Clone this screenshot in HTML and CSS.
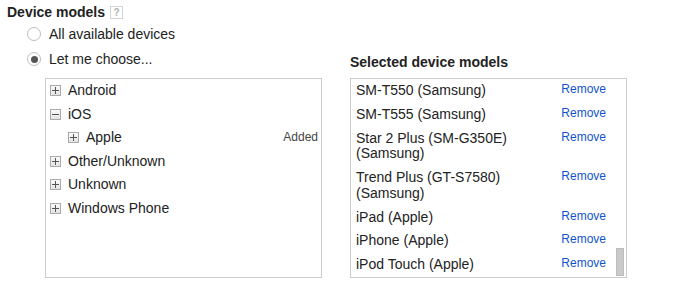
FILE: index.html
```html
<!DOCTYPE html>
<html lang="en">
<head>
    <meta charset="UTF-8">
    <title>Device models</title>
    <link rel="stylesheet" href="styles.css">
</head>
<body>
    <div class="page">
        <div class="title">Device models <span class="help">?</span></div>
        <label class="radio-row first">
            <span class="radio"></span>
            All available devices
        </label>
        <div class="columns">
            <div class="left-col">
                <label class="radio-row">
                    <span class="radio checked"></span>
                    Let me choose...
                </label>
                <div class="box tree">
                    <div class="node"><span class="toggle plus"></span><span class="label">Android</span></div>
                    <div class="node"><span class="toggle minus"></span><span class="label">iOS</span></div>
                    <div class="node child"><span class="toggle plus"></span><span class="label">Apple</span><span class="added">Added</span></div>
                    <div class="node"><span class="toggle plus"></span><span class="label">Other/Unknown</span></div>
                    <div class="node"><span class="toggle plus"></span><span class="label">Unknown</span></div>
                    <div class="node"><span class="toggle plus"></span><span class="label">Windows Phone</span></div>
                </div>
            </div>
            <div class="right-col">
                <div class="subtitle">Selected device models</div>
                <div class="box selected">
                    <div class="item"><span class="name">SM-T550 (Samsung)</span><a class="remove" href="#">Remove</a></div>
                    <div class="item"><span class="name">SM-T555 (Samsung)</span><a class="remove" href="#">Remove</a></div>
                    <div class="item"><span class="name">Star 2 Plus (SM-G350E) (Samsung)</span><a class="remove" href="#">Remove</a></div>
                    <div class="item"><span class="name">Trend Plus (GT-S7580) (Samsung)</span><a class="remove" href="#">Remove</a></div>
                    <div class="item"><span class="name">iPad (Apple)</span><a class="remove" href="#">Remove</a></div>
                    <div class="item"><span class="name">iPhone (Apple)</span><a class="remove" href="#">Remove</a></div>
                    <div class="item"><span class="name">iPod Touch (Apple)</span><a class="remove" href="#">Remove</a></div>
                    <div class="thumb"></div>
                </div>
            </div>
        </div>
    </div>
</body>
</html>
```

FILE: styles.css
```css
body {
    margin: 0;
    background-color: #fff;
    color: #222;
    font-family: "Liberation Sans", Arial, sans-serif;
    font-size: 14px;
}

.page {
    padding: 4px 0 0 7px;
}

.title {
    font-weight: bold;
    line-height: 16px;
    display: flex;
    align-items: center;
}

.help {
    width: 11px;
    height: 11px;
    margin-left: 5px;
    border: 1px solid #d4d4d4;
    color: #b0b0b0;
    font-size: 10px;
    font-weight: bold;
    line-height: 11px;
    text-align: center;
}

.radio-row {
    display: flex;
    align-items: center;
    height: 20px;
    margin-left: 20px;
}

.radio-row.first {
    margin-top: 4px;
    margin-bottom: 5px;
}

.left-col .radio-row {
    margin-left: 0;
    margin-bottom: 9px;
}

.radio {
    box-sizing: border-box;
    width: 14px;
    height: 14px;
    margin-right: 8px;
    border: 1px solid #bdbdbd;
    border-radius: 50%;
    background-color: #fff;
    display: flex;
    align-items: center;
    justify-content: center;
}

.radio.checked::after {
    content: "";
    width: 7px;
    height: 7px;
    border-radius: 50%;
    background-color: #555;
}

.columns {
    display: flex;
    align-items: flex-end;
    margin-left: 20px;
}

.left-col {
    display: flex;
    flex-direction: column;
}

.right-col {
    display: flex;
    flex-direction: column;
    margin-left: 28px;
}

.subtitle {
    font-weight: bold;
    line-height: 16px;
    margin-bottom: 8px;
}

.box {
    box-sizing: border-box;
    width: 277px;
    height: 200px;
    border: 1px solid #ccc;
    overflow: hidden;
}

.tree {
    margin-left: 18px;
}

.node {
    display: flex;
    align-items: center;
    padding: 4px 3px 4px 4px;
    line-height: 15.5px;
}

.node.child {
    padding-left: 22px;
}

.toggle {
    box-sizing: border-box;
    width: 11px;
    height: 11px;
    margin-right: 7px;
    border: 1px solid #aaa;
    background: linear-gradient(#fafafa, #e4e4e4);
    position: relative;
}

.toggle::before,
.toggle.plus::after {
    content: "";
    position: absolute;
    background-color: #555;
}

.toggle::before {
    left: 1px;
    right: 1px;
    top: 4px;
    height: 1px;
}

.toggle.plus::after {
    top: 1px;
    bottom: 1px;
    left: 4px;
    width: 1px;
}

.label {
    flex: 1;
}

.added {
    font-size: 12px;
    color: #444;
}

.selected {
    position: relative;
}

.item {
    display: flex;
    align-items: flex-start;
    padding: 4px 20px 4px 5px;
    line-height: 15.75px;
}

.name {
    flex: 1;
}

.remove {
    margin-top: -1px;
    margin-left: 10px;
    font-size: 12px;
    line-height: normal;
    color: #1155cc;
    text-decoration: none;
}

.thumb {
    position: absolute;
    right: 2px;
    bottom: 1px;
    width: 8px;
    height: 28px;
    background-color: #cacaca;
    border: 1px solid #bdbdbd;
    box-sizing: border-box;
}
```
